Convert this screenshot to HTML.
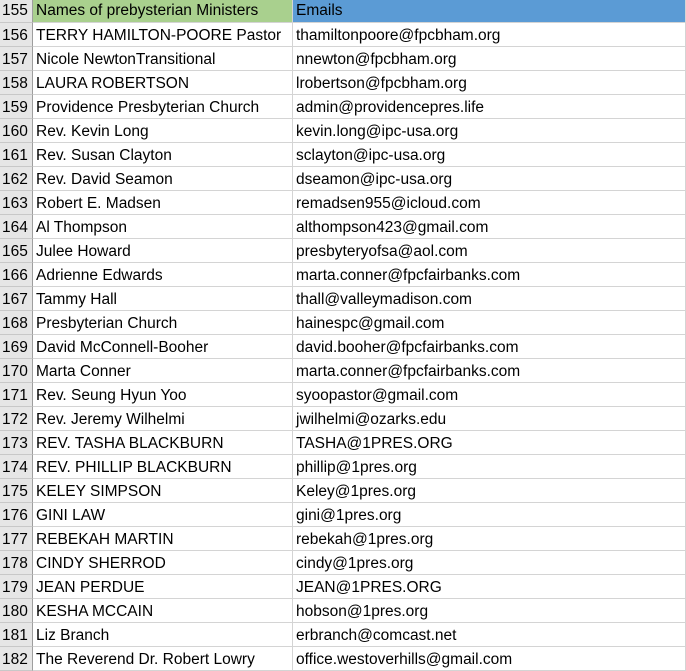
<!DOCTYPE html><html><head><style>
body{margin:0;width:686px;height:661px;overflow:hidden;background:#fff;font-family:"Liberation Sans",Carlito,sans-serif;font-size:15.5px;color:#000}
.r{display:flex;height:24px;box-sizing:border-box}
.r div{box-sizing:border-box;height:24px;border-right:1px solid #d4d4d4;border-bottom:1px solid #d4d4d4;white-space:nowrap;overflow:hidden;line-height:24px;padding-left:3px;padding-top:1px}
.r .n{width:33px;background:#e6e6e6;padding-left:2px;border-right:1px solid #9e9e9e;border-bottom:1px solid #c8c8c8}
.r .b{width:260px}.r .c{width:393px}
.h div{height:23px;line-height:22px;padding-top:0}
.h{height:23px}
.h .b{background:#a9d08e}.h .c{background:#5b9bd5}
</style></head><body>
<div class="r h"><div class="n">155</div><div class="b">Names of prebysterian Ministers</div><div class="c">Emails</div></div>
<div class="r"><div class="n">156</div><div class="b">TERRY HAMILTON-POORE Pastor</div><div class="c">thamiltonpoore@fpcbham.org</div></div>
<div class="r"><div class="n">157</div><div class="b">Nicole NewtonTransitional</div><div class="c">nnewton@fpcbham.org</div></div>
<div class="r"><div class="n">158</div><div class="b">LAURA ROBERTSON</div><div class="c">lrobertson@fpcbham.org</div></div>
<div class="r"><div class="n">159</div><div class="b">Providence Presbyterian Church</div><div class="c">admin@providencepres.life</div></div>
<div class="r"><div class="n">160</div><div class="b">Rev. Kevin Long</div><div class="c">kevin.long@ipc-usa.org</div></div>
<div class="r"><div class="n">161</div><div class="b">Rev. Susan Clayton</div><div class="c">sclayton@ipc-usa.org</div></div>
<div class="r"><div class="n">162</div><div class="b">Rev. David Seamon</div><div class="c">dseamon@ipc-usa.org</div></div>
<div class="r"><div class="n">163</div><div class="b">Robert E. Madsen</div><div class="c">remadsen955@icloud.com</div></div>
<div class="r"><div class="n">164</div><div class="b">Al Thompson</div><div class="c">althompson423@gmail.com</div></div>
<div class="r"><div class="n">165</div><div class="b">Julee Howard</div><div class="c">presbyteryofsa@aol.com</div></div>
<div class="r"><div class="n">166</div><div class="b">Adrienne Edwards</div><div class="c">marta.conner@fpcfairbanks.com</div></div>
<div class="r"><div class="n">167</div><div class="b">Tammy Hall</div><div class="c">thall@valleymadison.com</div></div>
<div class="r"><div class="n">168</div><div class="b">Presbyterian Church</div><div class="c">hainespc@gmail.com</div></div>
<div class="r"><div class="n">169</div><div class="b">David McConnell-Booher</div><div class="c">david.booher@fpcfairbanks.com</div></div>
<div class="r"><div class="n">170</div><div class="b">Marta Conner</div><div class="c">marta.conner@fpcfairbanks.com</div></div>
<div class="r"><div class="n">171</div><div class="b">Rev. Seung Hyun Yoo</div><div class="c">syoopastor@gmail.com</div></div>
<div class="r"><div class="n">172</div><div class="b">Rev. Jeremy Wilhelmi</div><div class="c">jwilhelmi@ozarks.edu</div></div>
<div class="r"><div class="n">173</div><div class="b">REV. TASHA BLACKBURN</div><div class="c">TASHA@1PRES.ORG</div></div>
<div class="r"><div class="n">174</div><div class="b">REV. PHILLIP BLACKBURN</div><div class="c">phillip@1pres.org</div></div>
<div class="r"><div class="n">175</div><div class="b">KELEY SIMPSON</div><div class="c">Keley@1pres.org</div></div>
<div class="r"><div class="n">176</div><div class="b">GINI LAW</div><div class="c">gini@1pres.org</div></div>
<div class="r"><div class="n">177</div><div class="b">REBEKAH MARTIN</div><div class="c">rebekah@1pres.org</div></div>
<div class="r"><div class="n">178</div><div class="b">CINDY SHERROD</div><div class="c">cindy@1pres.org</div></div>
<div class="r"><div class="n">179</div><div class="b">JEAN PERDUE</div><div class="c">JEAN@1PRES.ORG</div></div>
<div class="r"><div class="n">180</div><div class="b">KESHA MCCAIN</div><div class="c">hobson@1pres.org</div></div>
<div class="r"><div class="n">181</div><div class="b">Liz Branch</div><div class="c">erbranch@comcast.net</div></div>
<div class="r"><div class="n">182</div><div class="b">The Reverend Dr. Robert Lowry</div><div class="c">office.westoverhills@gmail.com</div></div>
</body></html>
